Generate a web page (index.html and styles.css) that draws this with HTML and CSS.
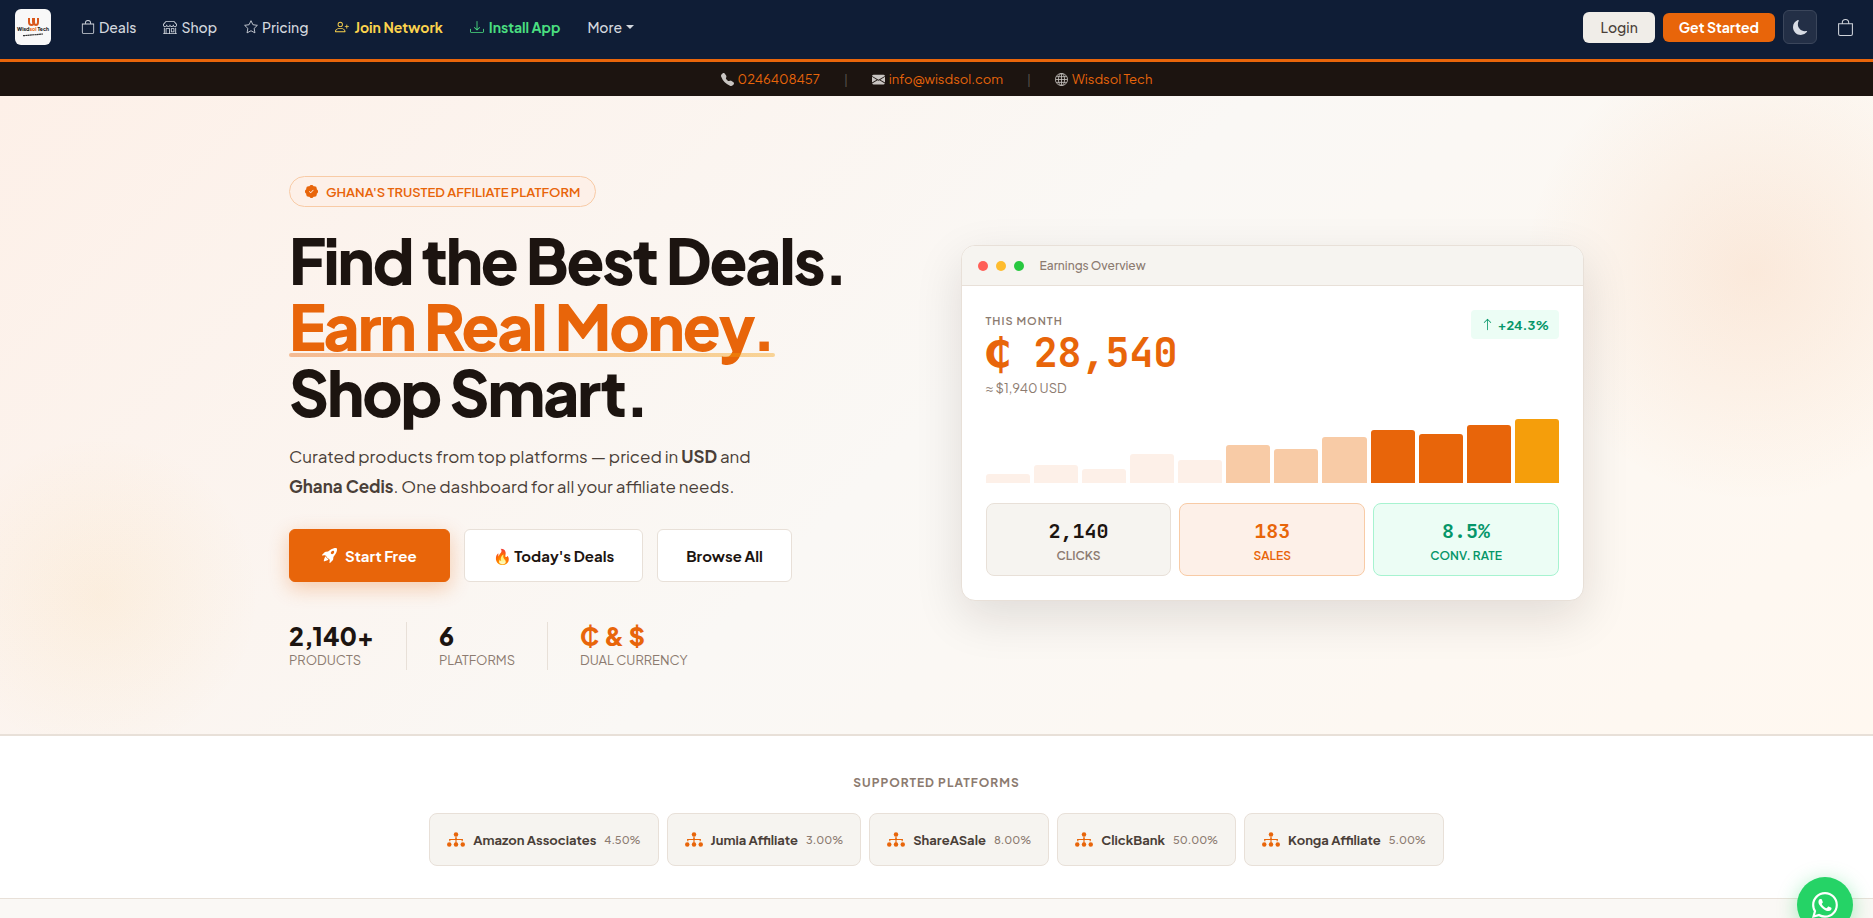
FILE: index.html
```html
<!DOCTYPE html>
<html lang="en">
<head>
    <meta charset="UTF-8">
    <meta name="viewport" content="width=device-width, initial-scale=1.0">
    <title>Wisdsol Tech</title>
    <link rel="stylesheet" href="styles.css">
</head>
<body>
    <!-- icon set -->
    <svg class="sprite" aria-hidden="true">
        <symbol id="i-bag" viewBox="0 0 16 16"><path d="M8 1a2.500 2.500 0 0 1 2.500 2.500V4h-5v-.5A2.500 2.500 0 0 1 8 1m3.500 3v-.5a3.500 3.500 0 1 0-7 0V4H1v10a2 2 0 0 0 2 2h10a2 2 0 0 0 2-2V4zM2 5h12v9a1 1 0 0 1-1 1H3a1 1 0 0 1-1-1z"/></symbol>
        <symbol id="i-shop" viewBox="0 0 16 16"><path d="M2.970 1.350A1 1 0 0 1 3.730 1h8.540a1 1 0 0 1 .76.350l2.609 3.044A1.500 1.500 0 0 1 16 5.370v.255a2.375 2.375 0 0 1-4.250 1.458A2.370 2.370 0 0 1 9.875 8 2.370 2.370 0 0 1 8 7.083 2.370 2.370 0 0 1 6.125 8a2.370 2.370 0 0 1-1.875-.917A2.375 2.375 0 0 1 0 5.625V5.370a1.500 1.500 0 0 1 .361-.976zm1.780 4.275a1.375 1.375 0 0 0 2.750 0 .5.5 0 0 1 1 0 1.375 1.375 0 0 0 2.750 0 .5.5 0 0 1 1 0 1.375 1.375 0 1 0 2.750 0V5.370a.5.5 0 0 0-.12-.325L12.270 2H3.730L1.120 5.045A.5.5 0 0 0 1 5.370v.255a1.375 1.375 0 0 0 2.750 0 .5.5 0 0 1 1 0M1.500 8.500A.5.5 0 0 1 2 9v6h1v-5a1 1 0 0 1 1-1h3a1 1 0 0 1 1 1v5h6V9a.5.5 0 0 1 1 0v6h.5a.5.5 0 0 1 0 1H.5a.5.5 0 0 1 0-1H1V9a.5.5 0 0 1 .5-.5M4 15h3v-5H4zm5-5a1 1 0 0 1 1-1h2a1 1 0 0 1 1 1v3a1 1 0 0 1-1 1h-2a1 1 0 0 1-1-1zm3 0h-2v3h2z"/></symbol>
        <symbol id="i-star" viewBox="0 0 16 16"><path fill="none" stroke="currentColor" stroke-linejoin="round" d="M8 .8l2.200 4.600 5.100.7-3.700 3.500.9 5.100L8 12.300l-4.500 2.400.9-5.100L.7 6.100l5.100-.7z"/></symbol>
        <symbol id="i-join" viewBox="0 0 16 16"><path d="M6 8a3 3 0 1 0 0-6 3 3 0 0 0 0 6m2-3a2 2 0 1 1-4 0 2 2 0 0 1 4 0m4 8c0 1-1 1-1 1H1s-1 0-1-1 1-4 6-4 6 3 6 4m-1-.004c-.001-.246-.154-.986-.832-1.664C9.516 10.680 8.289 10 6 10s-3.516.680-4.168 1.332c-.678.678-.830 1.418-.832 1.664z"/><path d="M13.500 5a.5.5 0 0 1 .5.5V7h1.500a.5.5 0 0 1 0 1H14v1.500a.5.5 0 0 1-1 0V8h-1.500a.5.5 0 0 1 0-1H13V5.500a.5.5 0 0 1 .5-.5"/></symbol>
        <symbol id="i-download" viewBox="0 0 16 16"><path d="M.5 9.900a.5.5 0 0 1 .5.5v2.500a1 1 0 0 0 1 1h12a1 1 0 0 0 1-1v-2.500a.5.5 0 0 1 1 0v2.500a2 2 0 0 1-2 2H2a2 2 0 0 1-2-2v-2.500a.5.5 0 0 1 .5-.5"/><path d="M7.646 11.854a.5.5 0 0 0 .708 0l3-3a.5.5 0 0 0-.708-.708L8.500 10.293V1.500a.5.5 0 0 0-1 0v8.793L5.354 8.146a.5.5 0 1 0-.708.708z"/></symbol>
        <symbol id="i-moon" viewBox="0 0 16 16"><path d="M6 .278a.770.770 0 0 1 .08.858 7.200 7.200 0 0 0-.878 3.460c0 4.021 3.278 7.277 7.318 7.277q.792-.001 1.533-.16a.790.790 0 0 1 .81.316.730.730 0 0 1-.031.893A8.350 8.350 0 0 1 8.344 16C3.734 16 0 12.286 0 7.710 0 4.266 2.114 1.312 5.124.060A.750.750 0 0 1 6 .278"/></symbol>
        <symbol id="i-phone" viewBox="0 0 16 16"><path fill-rule="evenodd" d="M1.885.511a1.745 1.745 0 0 1 2.610.163L6.290 2.980c.329.423.445.974.315 1.494l-.547 2.190a.680.680 0 0 0 .178.643l2.457 2.457a.680.680 0 0 0 .644.178l2.189-.547a1.750 1.750 0 0 1 1.494.315l2.306 1.794c.829.645.905 1.870.163 2.611l-1.034 1.034c-.740.740-1.846 1.065-2.877.702a18.600 18.600 0 0 1-7.010-4.420 18.600 18.600 0 0 1-4.420-7.009c-.362-1.030-.037-2.137.703-2.877z"/></symbol>
        <symbol id="i-mail" viewBox="0 0 16 16"><path d="M.05 3.555A2 2 0 0 1 2 2h12a2 2 0 0 1 1.950 1.555L8 8.414zM0 4.697v7.104l5.803-3.558zM6.761 8.830l-6.570 4.027A2 2 0 0 0 2 14h12a2 2 0 0 0 1.808-1.144l-6.570-4.027L8 9.586zm3.436-.586L16 11.801V4.697z"/></symbol>
        <symbol id="i-globe" viewBox="0 0 16 16"><g fill="none" stroke="currentColor"><circle cx="8" cy="8" r="7.500"/><ellipse cx="8" cy="8" rx="3.800" ry="7.500"/><path d="M8 .5v15M.5 8h15M1.700 4.500h12.600M1.700 11.500h12.600"/></g></symbol>
        <symbol id="i-patch" viewBox="0 0 16 16"><path d="M10.067.870a2.890 2.890 0 0 0-4.134 0l-.622.638-.890-.011a2.890 2.890 0 0 0-2.924 2.924l.010.890-.636.622a2.890 2.890 0 0 0 0 4.134l.637.622-.011.890a2.890 2.890 0 0 0 2.924 2.924l.890-.010.622.636a2.890 2.890 0 0 0 4.134 0l.622-.637.890.011a2.890 2.890 0 0 0 2.924-2.924l-.010-.890.636-.622a2.890 2.890 0 0 0 0-4.134l-.637-.622.011-.890a2.890 2.890 0 0 0-2.924-2.924l-.890.010zm.287 5.984-3 3a.5.5 0 0 1-.708 0l-1.500-1.500a.5.5 0 1 1 .708-.708L7 8.793l2.646-2.647a.5.5 0 0 1 .708.708"/></symbol>
        <symbol id="i-rocket" viewBox="0 0 16 16"><path d="M12.170 9.530c2.307-2.592 3.278-4.684 3.641-6.218.210-.887.214-1.580.160-2.065a3.600 3.600 0 0 0-.108-.563 2 2 0 0 0-.078-.230V.453c-.073-.164-.168-.234-.352-.295a2 2 0 0 0-.160-.045 4 4 0 0 0-.570-.093c-.490-.044-1.190-.030-2.080.188-1.536.374-3.618 1.343-6.161 3.604l-2.400.238h-.006a2.550 2.550 0 0 0-1.524.734L.150 7.170a.512.512 0 0 0 .433.868l1.896-.271c.280-.040.592.013.955.132.232.076.437.160.655.248l.203.083c.196.816.660 1.580 1.275 2.195.613.614 1.376 1.080 2.191 1.277l.082.202c.089.218.173.424.249.657.118.363.172.676.132.956l-.271 1.900a.512.512 0 0 0 .867.433l2.382-2.386c.410-.410.668-.949.732-1.526zm.110-3.699c-.797.800-1.930.961-2.528.362-.598-.600-.436-1.733.361-2.532.798-.799 1.930-.960 2.528-.361s.437 1.732-.360 2.531Z"/><path d="M5.205 10.787a7.600 7.600 0 0 0 1.804 1.352c-1.118 1.007-4.929 2.028-5.054 1.903-.126-.127.737-4.189 1.839-5.180.346.690.837 1.350 1.411 1.925"/></symbol>
        <symbol id="i-up" viewBox="0 0 16 16"><path fill-rule="evenodd" d="M8 15a.5.5 0 0 0 .5-.5V2.707l3.146 3.147a.5.5 0 0 0 .708-.708l-4-4a.5.5 0 0 0-.708 0l-4 4a.5.5 0 1 0 .708.708L7.500 2.707V14.500a.5.5 0 0 0 .5.5"/></symbol>
        <symbol id="i-tree" viewBox="0 0 16 16"><path d="M7.500 5h1v2H14v1H2V7h5.500z"/><path d="M7.500 6h1v5h-1zM2 7h1v2H2zm11 0h1v2h-1z"/><circle cx="8" cy="3.200" r="2"/><circle cx="2" cy="12" r="2"/><circle cx="8" cy="12" r="2"/><circle cx="14" cy="12" r="2"/></symbol>
        <symbol id="i-whatsapp" viewBox="0 0 16 16"><path d="M13.601 2.326A7.850 7.850 0 0 0 7.994 0C3.627 0 .068 3.558.064 7.926c0 1.399.366 2.760 1.057 3.965L0 16l4.204-1.102a7.900 7.900 0 0 0 3.790.965h.004c4.368 0 7.926-3.558 7.930-7.930A7.900 7.900 0 0 0 13.600 2.326zM7.994 14.521a6.600 6.600 0 0 1-3.356-.920l-.240-.144-2.494.654.666-2.433-.156-.251a6.560 6.560 0 0 1-1.007-3.505c0-3.626 2.957-6.584 6.591-6.584a6.560 6.560 0 0 1 4.660 1.931 6.560 6.560 0 0 1 1.928 4.660c-.004 3.639-2.961 6.592-6.592 6.592m3.615-4.934c-.197-.099-1.170-.578-1.353-.646-.182-.065-.315-.099-.445.099-.133.197-.513.646-.627.775-.114.133-.232.148-.430.050-.197-.100-.836-.308-1.592-.985-.590-.525-.985-1.175-1.103-1.372-.114-.198-.011-.304.088-.403.087-.088.197-.232.296-.346.100-.114.133-.198.198-.330.065-.134.034-.248-.015-.347-.050-.099-.445-1.076-.612-1.470-.160-.389-.323-.335-.445-.340-.114-.007-.247-.007-.380-.007a.730.730 0 0 0-.529.247c-.182.198-.691.677-.691 1.654s.710 1.916.810 2.049c.098.133 1.394 2.132 3.383 2.992.470.205.840.326 1.129.418.475.152.904.129 1.246.080.380-.058 1.171-.480 1.338-.943.164-.464.164-.860.114-.943-.049-.084-.182-.133-.380-.232"/></symbol>
    </svg>

    <header class="navbar">
        <a class="logo" href="#" aria-label="Wisdsol Tech">
            <svg viewBox="0 0 36 36">
                <path d="M14 9v4q0 3 2.500 3T18 13V9m1 0v4q0 3 2 3t2-3V9" fill="none" stroke="#d9581c" stroke-width="2"/>
                <text x="18" y="22" text-anchor="middle" class="logo-name">Wisd<tspan fill="#e8650a">sol</tspan> Tech</text>
                <path d="M8 26.700l20-1.700" stroke="#333" stroke-width="1.200" stroke-dasharray="2 .3"/>
            </svg>
        </a>
        <nav class="nav-links">
            <a href="#"><svg class="icon"><use href="#i-bag"/></svg>Deals</a>
            <a href="#"><svg class="icon"><use href="#i-shop"/></svg>Shop</a>
            <a href="#"><svg class="icon"><use href="#i-star"/></svg>Pricing</a>
            <a href="#" class="join"><svg class="icon"><use href="#i-join"/></svg>Join Network</a>
            <a href="#" class="install"><svg class="icon"><use href="#i-download"/></svg>Install App</a>
            <a href="#" class="more">More</a>
        </nav>
        <div class="nav-actions">
            <a href="#" class="btn-login">Login</a>
            <a href="#" class="btn-started">Get Started</a>
            <button type="button" class="theme-toggle" aria-label="Toggle theme"><svg class="icon"><use href="#i-moon"/></svg></button>
            <a href="#" class="cart" aria-label="Cart"><svg class="icon"><use href="#i-bag"/></svg></a>
        </div>
    </header>

    <div class="topbar">
        <span><svg class="icon"><use href="#i-phone"/></svg><a href="#">0246408457</a></span>
        <span class="sep">|</span>
        <span><svg class="icon"><use href="#i-mail"/></svg><a href="#">info@wisdsol.com</a></span>
        <span class="sep">|</span>
        <span><svg class="icon"><use href="#i-globe"/></svg><a href="#">Wisdsol Tech</a></span>
    </div>

    <section class="hero">
        <div class="hero-inner">
            <div class="hero-text">
                <div class="hero-badge"><svg class="icon"><use href="#i-patch"/></svg>GHANA'S TRUSTED AFFILIATE PLATFORM</div>
                <h1>Find the Best Deals.<br><span class="accent">Earn Real Money.</span><br>Shop Smart.</h1>
                <p class="lead">Curated products from top platforms — priced in <strong>USD</strong> and <strong>Ghana Cedis</strong>. One dashboard for all your affiliate needs.</p>
                <div class="hero-buttons">
                    <a href="#" class="btn btn-primary"><svg class="icon"><use href="#i-rocket"/></svg>Start Free</a>
                    <a href="#" class="btn">🔥 Today's Deals</a>
                    <a href="#" class="btn">Browse All</a>
                </div>
                <div class="hero-stats">
                    <div class="stat"><b>2,140+</b><span>PRODUCTS</span></div>
                    <div class="stat"><b>6</b><span>PLATFORMS</span></div>
                    <div class="stat"><b class="orange">₵ &amp; $</b><span>DUAL CURRENCY</span></div>
                </div>
            </div>

            <div class="earnings">
                <div class="earnings-head">
                    <i class="dot red"></i><i class="dot yellow"></i><i class="dot green"></i>
                    <span>Earnings Overview</span>
                </div>
                <div class="earnings-body">
                    <div class="earnings-top">
                        <div>
                            <div class="month">THIS MONTH</div>
                            <div class="amount">₵ 28,540</div>
                            <div class="usd">≈ $1,940 USD</div>
                        </div>
                        <div class="growth"><svg class="icon"><use href="#i-up"/></svg>+24.3%</div>
                    </div>
                    <div class="chart">
                        <div class="bar" style="height: 14%"></div>
                        <div class="bar" style="height: 28%"></div>
                        <div class="bar" style="height: 22%"></div>
                        <div class="bar" style="height: 45%"></div>
                        <div class="bar" style="height: 36%"></div>
                        <div class="bar mid" style="height: 60%"></div>
                        <div class="bar mid" style="height: 53%"></div>
                        <div class="bar mid" style="height: 72%"></div>
                        <div class="bar high" style="height: 83%"></div>
                        <div class="bar high" style="height: 77%"></div>
                        <div class="bar high" style="height: 91%"></div>
                        <div class="bar top" style="height: 100%"></div>
                    </div>
                    <div class="tiles">
                        <div class="tile"><b>2,140</b><span>CLICKS</span></div>
                        <div class="tile sales"><b>183</b><span>SALES</span></div>
                        <div class="tile rate"><b>8.5%</b><span>CONV. RATE</span></div>
                    </div>
                </div>
            </div>
        </div>
    </section>

    <section class="platforms">
        <h2>SUPPORTED PLATFORMS</h2>
        <div class="platform-list">
            <div class="platform"><svg class="icon"><use href="#i-tree"/></svg><b>Amazon Associates</b><span>4.50%</span></div>
            <div class="platform"><svg class="icon"><use href="#i-tree"/></svg><b>Jumia Affiliate</b><span>3.00%</span></div>
            <div class="platform"><svg class="icon"><use href="#i-tree"/></svg><b>ShareASale</b><span>8.00%</span></div>
            <div class="platform"><svg class="icon"><use href="#i-tree"/></svg><b>ClickBank</b><span>50.00%</span></div>
            <div class="platform"><svg class="icon"><use href="#i-tree"/></svg><b>Konga Affiliate</b><span>5.00%</span></div>
        </div>
    </section>

    <a href="#" class="whatsapp" aria-label="WhatsApp"><svg class="icon"><use href="#i-whatsapp"/></svg></a>
</body>
</html>
```
FILE: styles.css
```css
* {
    box-sizing: border-box;
}

body {
    margin: 0;
    font-family: "Plus Jakarta Sans", Inter, sans-serif;
    font-size: 16px;
    color: #1c1410;
    background: #faf8f5;
}

a {
    text-decoration: none;
}

.sprite {
    display: none;
}

.icon {
    width: 1em;
    height: 1em;
    fill: currentColor;
    flex: none;
}

/* navbar */
.navbar {
    display: flex;
    align-items: center;
    height: 62px;
    padding: 0 15px 5px;
    background: #0f1d36;
    border-bottom: 3px solid #e8650a;
}

.logo {
    width: 36px;
    height: 36px;
    margin-right: 30px;
    background: #f8f8f8;
    border-radius: 6px;
}

.logo svg {
    display: block;
}

.logo-name {
    font-size: 5px;
    font-weight: 800;
    fill: #222;
}

.nav-links {
    display: flex;
    gap: 27px;
}

.nav-links a {
    display: flex;
    align-items: center;
    gap: 4px;
    font-size: 14px;
    font-weight: 500;
    color: #d3d7de;
}

.nav-links .join {
    gap: 5px;
    color: #fcd34d;
    font-weight: 700;
}

.nav-links .install {
    gap: 5px;
    color: #4ade80;
    font-weight: 700;
}

.more::after {
    content: "";
    border: 4px solid transparent;
    border-top-color: currentColor;
    border-bottom: 0;
}

.nav-actions {
    display: flex;
    align-items: center;
    gap: 8px;
    margin-left: auto;
}

.btn-login {
    padding: 0 17px;
    line-height: 31px;
    font-size: 14px;
    font-weight: 500;
    color: #4a3f38;
    background: #f0ede8;
    border-radius: 6px;
}

.btn-started {
    padding: 0 16px;
    line-height: 29px;
    font-size: 14px;
    font-weight: 700;
    color: #fff;
    background: #e8650a;
    border-radius: 6px;
}

.theme-toggle {
    display: flex;
    align-items: center;
    justify-content: center;
    width: 34px;
    height: 34px;
    padding: 0;
    font-size: 15px;
    color: #d8dce4;
    background: #232f46;
    border: 1px solid #3b465b;
    border-radius: 6px;
}

.cart {
    display: flex;
    margin: 0 4px 0 12px;
    font-size: 17px;
    color: #cfd3da;
}

/* contact bar */
.topbar {
    display: flex;
    align-items: center;
    justify-content: center;
    gap: 24px;
    height: 34px;
    font-size: 13px;
    color: #c9c5c2;
    background: #1c1410;
}

.topbar span {
    display: flex;
    align-items: center;
    gap: 4px;
}

.topbar a {
    color: #e8650a;
}

.topbar .sep {
    color: #55504c;
}

/* hero */
.hero {
    padding: 80px 24px 64px;
    background:
        radial-gradient(circle at 1753px 176px, rgba(232, 101, 10, .1), transparent 230px),
        radial-gradient(circle at 100px 500px, rgba(245, 158, 11, .07), transparent 160px),
        linear-gradient(135deg, #fdf0e8 0%, #faf8f5 50%, #fff8f0 100%);
    border-bottom: 2px solid #e8e0d8;
}

.hero-inner {
    display: grid;
    grid-template-columns: 1fr 1fr;
    align-items: center;
    gap: 48px;
    max-width: 1295px;
    margin: 0 auto;
}

.hero-badge {
    display: inline-flex;
    align-items: center;
    gap: 8px;
    height: 31px;
    padding: 0 15px;
    font-size: 13px;
    font-weight: 600;
    color: #e8650a;
    background: #fdf0e8;
    border: 1px solid #f8cba6;
    border-radius: 16px;
}

h1 {
    margin: 20px 0 16px;
    font-size: 62px;
    line-height: 66px;
    font-weight: 800;
    letter-spacing: -2px;
}

.accent {
    position: relative;
    color: #e8650a;
}

.accent::after {
    content: "";
    position: absolute;
    left: 0;
    right: 0;
    bottom: 8px;
    height: 4px;
    border-radius: 2px;
    background: linear-gradient(90deg, #e8650a, #f59e0b);
    opacity: .4;
}

.lead {
    max-width: 480px;
    margin: 0 0 28px;
    font-size: 17px;
    line-height: 30px;
    color: #4a3f38;
}

.hero-buttons {
    display: flex;
    gap: 14px;
    margin-bottom: 40px;
}

.btn {
    display: flex;
    align-items: center;
    gap: 8px;
    height: 53px;
    padding: 0 28px;
    font-size: 15px;
    font-weight: 700;
    color: #1c1410;
    background: #fff;
    border: 1px solid #e8e0d8;
    border-radius: 6px;
}

.btn-primary {
    padding: 0 32px;
    color: #fff;
    background: #e8650a;
    border-color: #e8650a;
    box-shadow: 0 6px 20px rgba(232, 101, 10, .3);
}

.hero-stats {
    display: flex;
}

.stat {
    padding-right: 32px;
}

.stat + .stat {
    padding-left: 32px;
    border-left: 1px solid #e8e0d8;
}

.stat b {
    display: block;
    font-size: 25px;
    line-height: 28px;
    font-weight: 800;
}

.stat span {
    display: block;
    font-size: 13px;
    line-height: 20px;
    color: #8c7b70;
}

.stat .orange {
    color: #e8650a;
}

/* earnings card */
.earnings {
    overflow: hidden;
    background: #fff;
    border: 1px solid #e8e0d8;
    border-radius: 14px;
    box-shadow: 0 16px 48px rgba(28, 20, 16, .12);
}

.earnings-head {
    display: flex;
    align-items: center;
    gap: 8px;
    height: 40px;
    padding: 0 16px;
    font-size: 12px;
    font-weight: 500;
    color: #8c7b70;
    background: #f6f4f0;
    border-bottom: 1px solid #e8e0d8;
}

.earnings-head span {
    margin-left: 8px;
}

.dot {
    width: 10px;
    height: 10px;
    border-radius: 50%;
}

.red {
    background: #ff5f57;
}

.yellow {
    background: #febc2e;
}

.green {
    background: #28c840;
}

.earnings-body {
    padding: 24px;
}

.earnings-top {
    display: flex;
    align-items: flex-start;
    justify-content: space-between;
    height: 109px;
}

.month {
    font-size: 11px;
    line-height: 22px;
    font-weight: 600;
    letter-spacing: 1px;
    color: #8c7b70;
}

.amount {
    font-family: "JetBrains Mono", "DejaVu Sans Mono", monospace;
    font-size: 40px;
    line-height: 42px;
    font-weight: 700;
    color: #e8650a;
}

.usd {
    margin-top: 2px;
    font-size: 13px;
    line-height: 24px;
    color: #8c7b70;
}

.growth {
    display: flex;
    align-items: center;
    gap: 4px;
    height: 29px;
    padding: 0 10px;
    font-size: 13px;
    font-weight: 700;
    color: #059669;
    background: #ecfdf5;
    border-radius: 4px;
}

.chart {
    display: flex;
    align-items: flex-end;
    gap: 4px;
    height: 64px;
    margin-bottom: 20px;
}

.bar {
    flex: 1;
    background: #fdf0e8;
    border-radius: 3px 3px 0 0;
}

.mid {
    background: #f8cba6;
}

.high {
    background: #e8650a;
}

.top {
    background: #f59e0b;
}

.tiles {
    display: grid;
    grid-template-columns: repeat(3, 1fr);
    gap: 8px;
}

.tile {
    height: 73px;
    padding-top: 12px;
    text-align: center;
    background: #f6f4f0;
    border: 1px solid #e8e0d8;
    border-radius: 8px;
}

.tile b {
    display: block;
    font-family: "JetBrains Mono", "DejaVu Sans Mono", monospace;
    font-size: 20px;
    line-height: 30px;
}

.tile span {
    display: block;
    font-size: 12px;
    line-height: 20px;
    font-weight: 600;
    color: #8c7b70;
}

.sales {
    background: #fdf0e8;
    border-color: #f8cba6;
}

.sales b,
.sales span {
    color: #e8650a;
}

.rate {
    background: #ecfdf5;
    border-color: #a7f3d0;
}

.rate b,
.rate span {
    color: #059669;
}

/* supported platforms */
.platforms {
    padding: 36px 24px 32px;
    background: #fff;
    border-bottom: 1px solid #e8e0d8;
}

.platforms h2 {
    margin: 0 0 20px;
    font-size: 12px;
    line-height: 21px;
    font-weight: 700;
    letter-spacing: 1px;
    text-align: center;
    color: #8c7b70;
}

.platform-list {
    display: flex;
    flex-wrap: wrap;
    justify-content: center;
    gap: 8px;
}

.platform {
    display: flex;
    align-items: center;
    gap: 8px;
    height: 53px;
    padding: 0 17px;
    background: #f6f4f0;
    border: 1px solid #e8e0d8;
    border-radius: 8px;
}

.platform .icon {
    font-size: 18px;
    color: #e8650a;
}

.platform b {
    font-size: 13px;
    font-weight: 700;
    color: #4a3f38;
}

.platform span {
    font-size: 11px;
    font-weight: 500;
    color: #8c7b70;
}

.whatsapp {
    position: fixed;
    right: 20px;
    bottom: -15px;
    display: flex;
    align-items: center;
    justify-content: center;
    width: 56px;
    height: 56px;
    font-size: 26px;
    color: #fff;
    background: #25d366;
    border-radius: 50%;
    box-shadow: 0 4px 20px rgba(37, 211, 102, .4);
}
```
